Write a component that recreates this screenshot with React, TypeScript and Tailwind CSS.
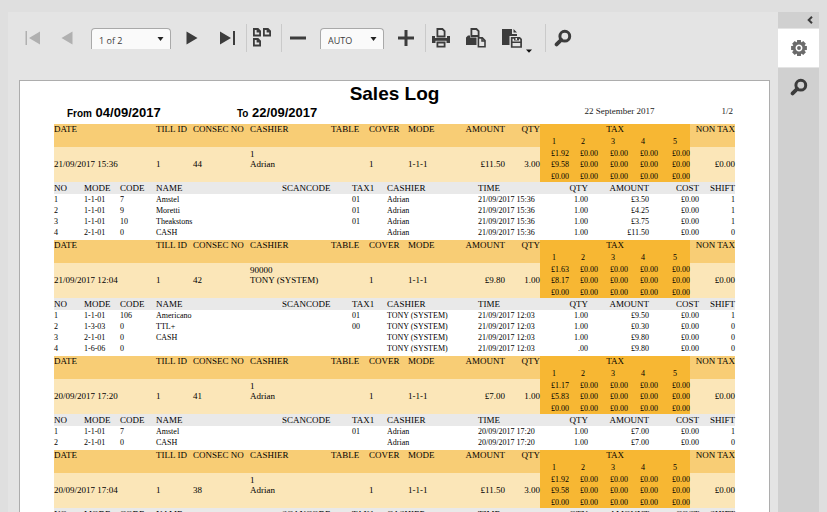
import React from 'react';

interface LogItem {
    no: number;
    mode: string;
    code: string;
    name: string;
    tax: string;
    cashier: string;
    time: string;
    qty: string;
    amount: string;
    shift: string;
}

interface Sale {
    date: string;
    consecNo: string;
    cashierNo: string;
    cashier: string;
    amount: string;
    qty: string;
    tax: string[];
    items: LogItem[];
}

const item = (
    no: number, mode: string, code: string, name: string, tax: string,
    cashier: string, time: string, qty: string, amount: string, shift: string,
): LogItem => ({ no, mode, code, name, tax, cashier, time, qty, amount, shift });

const sales: Sale[] = [
    {
        date: '21/09/2017 15:36', consecNo: '44', cashierNo: '1', cashier: 'Adrian',
        amount: '£11.50', qty: '3.00', tax: ['£1.92', '£9.58', '£0.00'],
        items: [
            item(1, '1-1-01', '7', 'Amstel', '01', 'Adrian', '21/09/2017 15:36', '1.00', '£3.50', '1'),
            item(2, '1-1-01', '9', 'Moretti', '01', 'Adrian', '21/09/2017 15:36', '1.00', '£4.25', '1'),
            item(3, '1-1-01', '10', 'Theakstons', '01', 'Adrian', '21/09/2017 15:36', '1.00', '£3.75', '1'),
            item(4, '2-1-01', '0', 'CASH', '', 'Adrian', '21/09/2017 15:36', '1.00', '£11.50', '0'),
        ],
    },
    {
        date: '21/09/2017 12:04', consecNo: '42', cashierNo: '90000', cashier: 'TONY (SYSTEM)',
        amount: '£9.80', qty: '1.00', tax: ['£1.63', '£8.17', '£0.00'],
        items: [
            item(1, '1-1-01', '106', 'Americano', '01', 'TONY (SYSTEM)', '21/09/2017 12:03', '1.00', '£9.50', '1'),
            item(2, '1-3-03', '0', 'TTL+', '00', 'TONY (SYSTEM)', '21/09/2017 12:03', '1.00', '£0.30', '0'),
            item(3, '2-1-01', '0', 'CASH', '', 'TONY (SYSTEM)', '21/09/2017 12:03', '1.00', '£9.80', '0'),
            item(4, '1-6-06', '0', '', '', 'TONY (SYSTEM)', '21/09/2017 12:03', '.00', '£9.80', '0'),
        ],
    },
    {
        date: '20/09/2017 17:20', consecNo: '41', cashierNo: '1', cashier: 'Adrian',
        amount: '£7.00', qty: '1.00', tax: ['£1.17', '£5.83', '£0.00'],
        items: [
            item(1, '1-1-01', '7', 'Amstel', '01', 'Adrian', '20/09/2017 17:20', '1.00', '£7.00', '1'),
            item(2, '2-1-01', '0', 'CASH', '', 'Adrian', '20/09/2017 17:20', '1.00', '£7.00', '0'),
        ],
    },
    {
        date: '20/09/2017 17:04', consecNo: '38', cashierNo: '1', cashier: 'Adrian',
        amount: '£11.50', qty: '3.00', tax: ['£1.92', '£9.58', '£0.00'],
        items: [],
    },
];

const Separator = () => <div className="w-px self-stretch bg-[#cacaca]" />;

const ToolButton: React.FC<{ label: string; className: string; disabled?: boolean; children: React.ReactNode }> = ({
    label, className, disabled, children,
}) => (
    <button
        type="button"
        aria-label={label}
        disabled={disabled}
        className={`flex h-7 shrink-0 items-center justify-center text-[#3c3c3c] disabled:text-[#b0b0b0] ${className}`}
    >
        {children}
    </button>
);

const ToolSelect: React.FC<{ label: string; className: string; options: string[] }> = ({ label, className, options }) => (
    <div className={`relative h-[21px] shrink-0 ${className}`}>
        <select
            aria-label={label}
            className="block h-full w-full appearance-none rounded-t border border-b-0 border-[#a9a9a9] bg-[#fafafa] pt-[5px] pl-[7px] font-['Open_Sans',sans-serif] text-[9px] text-[#3c3c3c]"
        >
            {options.map((o) => <option key={o}>{o}</option>)}
        </select>
        <svg className="pointer-events-none absolute top-[9px] right-[7px] h-1 w-[7px] text-[#222]" viewBox="0 0 7 4">
            <path d="M0.5 0h6L3.5 4z" fill="currentColor" />
        </svg>
    </div>
);

const SearchIcon = () => (
    <svg width="18" height="18" viewBox="0 0 18 18" fill="none" stroke="currentColor">
        <circle cx="10.8" cy="7.2" r="4.9" strokeWidth="3" />
        <path d="M7.2 10.8L2.6 15.4" strokeWidth="3.8" strokeLinecap="round" />
    </svg>
);

const Toolbar = () => (
    <div className="flex h-7 items-center pl-2">
        <ToolButton label="First page" className="w-[34px]" disabled>
            <svg width="16" height="14" viewBox="0 0 16 14" fill="currentColor">
                <path d="M0.5 0H2v14H0.5zM15 0.5v13L4 7z" />
            </svg>
        </ToolButton>
        <ToolButton label="Previous page" className="w-[34px]" disabled>
            <svg width="12" height="14" viewBox="0 0 12 14" fill="currentColor">
                <path d="M11.5 0.5v13L0.5 7z" />
            </svg>
        </ToolButton>
        <ToolSelect label="Page" className="mr-[3px] ml-[7px] w-20" options={['1 of 2', '2 of 2']} />
        <ToolButton label="Next page" className="w-9">
            <svg width="12" height="14" viewBox="0 0 12 14" fill="currentColor">
                <path d="M0.5 0.5v13L11.5 7z" />
            </svg>
        </ToolButton>
        <ToolButton label="Last page" className="w-9">
            <svg width="16" height="14" viewBox="0 0 16 14" fill="currentColor">
                <path d="M0 0.5v13L11 7zM13 0h2v14h-2z" />
            </svg>
        </ToolButton>
        <Separator />
        <ToolButton label="Multipage mode" className="mr-1 w-[30px]">
            <svg width="18" height="20" viewBox="0 0 18 20" fill="none" stroke="currentColor" strokeWidth="1.8">
                <path d="M0.9 1h4l2.2 2.2v4.300H0.9z M4.500 1v2.600h2.600" />
                <path d="M10.900 1h4l2.200 2.200v4.300h-6.200z M14.500 1v2.600h2.600" />
                <path d="M0.900 11h4l2.200 2.200v4.300H0.900z M4.500 11v2.600h2.600" />
            </svg>
        </ToolButton>
        <Separator />
        <ToolButton label="Zoom out" className="w-8">
            <svg width="16" height="4" viewBox="0 0 16 4"><path d="M0 0.5h16v3H0z" fill="currentColor" /></svg>
        </ToolButton>
        <ToolSelect label="Zoom" className="mx-[6px] w-16" options={['AUTO', '100%']} />
        <ToolButton label="Zoom in" className="mr-[3px] w-8">
            <svg width="16" height="16" viewBox="0 0 16 16">
                <path d="M6.5 0h3v6.5H16v3H9.5V16h-3V9.5H0v-3h6.5z" fill="currentColor" />
            </svg>
        </ToolButton>
        <Separator />
        <ToolButton label="Print" className="w-[30px]">
            <svg width="18" height="20" viewBox="0 0 18 20">
                <path d="M0 8h3v2h12V8h3v7H0z" fill="currentColor" />
                <path d="M5.4 8.500V1h5l2.200 2.200v5.300z" fill="#e4e4e4" stroke="currentColor" strokeWidth="1.8" />
                <path d="M3.500 12.800h11V20h-11z" fill="#e4e4e4" />
                <path d="M5.400 14.500h7.200v4.200H5.400z" fill="none" stroke="currentColor" strokeWidth="1.8" />
            </svg>
        </ToolButton>
        <ToolButton label="Print page" className="w-10">
            <svg width="20" height="20" viewBox="0 0 20 20">
                <path d="M0 9.500L2 7.500h2v2h9V17H0z" fill="currentColor" />
                <path d="M5.400 8V1h5l2.200 2.200V8z" fill="#e4e4e4" stroke="currentColor" strokeWidth="1.8" />
                <path d="M10.500 9h6l3.500 3v8h-9.500z" fill="#e4e4e4" />
                <path d="M12.400 9.900h3.900l2.700 2.700v6.200h-6.600z" fill="#e4e4e4" stroke="currentColor" strokeWidth="1.600" />
                <path d="M16 9.900v3h3" fill="none" stroke="currentColor" strokeWidth="1.500" />
            </svg>
        </ToolButton>
        <ToolButton label="Export to" className="relative mr-[17px] w-8">
            <svg width="20" height="20" viewBox="0 0 20 20">
                <path d="M0 1h10v5h5v11H0z" fill="currentColor" />
                <path d="M11.500 1l3.500 3.500h-3.500z" fill="currentColor" />
                <path d="M7.500 8h13v12h-13z" fill="#e4e4e4" />
                <path d="M9.700 9.800h7.900l1.500 1.500v7.700H9.700z" fill="none" stroke="currentColor" strokeWidth="1.700" />
                <path d="M12 9h5v3.500h-5zM9.500 13.500h10v1.500h-10z" fill="currentColor" />
                <path d="M13.500 10h1.500v2h-1.500z" fill="#e4e4e4" />
            </svg>
            <svg className="absolute -right-1 -bottom-px" width="6" height="4" viewBox="0 0 6 4">
                <path d="M0 0.500h6L3 3.800z" fill="#111" />
            </svg>
        </ToolButton>
        <Separator />
        <ToolButton label="Search" className="w-[34px]"><SearchIcon /></ToolButton>
    </div>
);

const Sidebar = () => (
    <aside className="flex w-[41px] shrink-0 flex-col bg-[#d0d0d0]">
        <button type="button" aria-label="Collapse" className="flex h-4 items-center justify-end pr-[6px] text-[#3c3c3c]">
            <svg width="6" height="8" viewBox="0 0 6 8" fill="none" stroke="currentColor" strokeWidth="2">
                <path d="M5 0.8L1.700 4L5 7.200" />
            </svg>
        </button>
        <button type="button" aria-label="Export options" className="flex h-10 items-center justify-center border-y border-[#e4e4e4] bg-white text-[#6b6b6b]">
            <svg width="18" height="18" viewBox="-9 -9 18 18">
                {[0, 45, 90, 135].map((a) => (
                    <path key={a} d="M-1.900 -7.900h3.800L2.600 0L1.900 7.900h-3.800L-2.600 0z" transform={`rotate(${a})`} fill="currentColor" />
                ))}
                <circle r="6.200" fill="currentColor" />
                <circle r="2.700" fill="none" stroke="#fff" strokeWidth="1.500" />
            </svg>
        </button>
        <button type="button" aria-label="Search panel" className="flex h-[38px] items-center justify-center text-[#3c3c3c]">
            <SearchIcon />
        </button>
    </aside>
);

const SaleTable: React.FC<{ sale: Sale }> = ({ sale }) => {
    const th = 'p-0 align-top text-left font-normal';
    const td = 'p-0 pb-[13px] align-bottom';
    return (
        <table className="w-full table-fixed border-collapse text-[9px] leading-[10px] whitespace-nowrap">
            <colgroup>
                <col className="w-[102px]" />
                <col className="w-[37px]" />
                <col className="w-[57px]" />
                <col className="w-[81px]" />
                <col className="w-[38px]" />
                <col className="w-[39px]" />
                <col className="w-[57px]" />
                <col className="w-[40px]" />
                <col className="w-[35px]" />
                <col className="w-[29px]" />
                <col className="w-[29px]" />
                <col className="w-[30px]" />
                <col className="w-[30px]" />
                <col className="w-[32px]" />
                <col className="w-[45px]" />
            </colgroup>
            <thead className="bg-[#f8cd75]">
                <tr className="h-3">
                    <th rowSpan={2} className={th}>DATE</th>
                    <th rowSpan={2} className={th}>TILL ID</th>
                    <th rowSpan={2} className={th}>CONSEC NO</th>
                    <th rowSpan={2} className={th}>CASHIER</th>
                    <th rowSpan={2} className={th}>TABLE</th>
                    <th rowSpan={2} className={th}>COVER</th>
                    <th rowSpan={2} className={th}>MODE</th>
                    <th rowSpan={2} className="p-0 text-right align-top font-normal">AMOUNT</th>
                    <th rowSpan={2} className="p-0 text-right align-top font-normal">QTY</th>
                    <th colSpan={5} className="bg-[#f7b733] p-0 text-center align-top font-normal">TAX</th>
                    <th rowSpan={2} className="p-0 text-right align-top font-normal">NON TAX</th>
                </tr>
                <tr className="h-[11px] text-[8px]">
                    {[1, 2, 3, 4, 5].map((n) => (
                        <th key={n} className="bg-[#f7b733] p-0 pr-[13px] text-right align-bottom font-normal">{n}</th>
                    ))}
                </tr>
            </thead>
            <tbody className="bg-[#fbe6b8]">
                {sale.tax.map((tax, i) => (
                    <tr key={i} className={i === 1 ? 'h-[11px]' : 'h-3'}>
                        {i === 0 && (
                            <>
                                <td rowSpan={3} className={td}>{sale.date}</td>
                                <td rowSpan={3} className={td}>1</td>
                                <td rowSpan={3} className={td}>{sale.consecNo}</td>
                                <td rowSpan={3} className={td}>{sale.cashierNo}<br />{sale.cashier}</td>
                                <td rowSpan={3} className={td} />
                                <td rowSpan={3} className={td}>1</td>
                                <td rowSpan={3} className={td}>1-1-1</td>
                                <td rowSpan={3} className={`${td} text-right`}>{sale.amount}</td>
                                <td rowSpan={3} className={`${td} text-right`}>{sale.qty}</td>
                            </>
                        )}
                        {[tax, '£0.00', '£0.00', '£0.00', '£0.00'].map((value, n) => (
                            <td key={n} className="bg-[#f7b733] p-0 text-right align-bottom text-[8px]">{value}</td>
                        ))}
                        {i === 0 && <td rowSpan={3} className={`${td} text-right`}>£0.00</td>}
                    </tr>
                ))}
            </tbody>
        </table>
    );
};

const ItemTable: React.FC<{ items: LogItem[] }> = ({ items }) => {
    const left = 'p-0 text-left font-normal';
    const right = 'p-0 text-right font-normal';
    return (
        <table className="mb-[2px] w-full table-fixed border-collapse text-[8px] leading-[11px] whitespace-nowrap">
            <colgroup>
                <col className="w-[30px]" />
                <col className="w-[36px]" />
                <col className="w-[36px]" />
                <col className="w-[126px]" />
                <col className="w-[70px]" />
                <col className="w-[35px]" />
                <col className="w-[91px]" />
                <col className="w-[62px]" />
                <col className="w-[48px]" />
                <col className="w-[61px]" />
                <col className="w-[50px]" />
                <col className="w-[36px]" />
            </colgroup>
            <thead className="bg-[#e9e9e9] text-[9px]">
                <tr className="h-3">
                    <th className={left}>NO</th>
                    <th className={left}>MODE</th>
                    <th className={left}>CODE</th>
                    <th className={left}>NAME</th>
                    <th className={left}>SCANCODE</th>
                    <th className={left}>TAX1</th>
                    <th className={left}>CASHIER</th>
                    <th className={left}>TIME</th>
                    <th className={right}>QTY</th>
                    <th className={right}>AMOUNT</th>
                    <th className={right}>COST</th>
                    <th className={right}>SHIFT</th>
                </tr>
            </thead>
            <tbody>
                {items.map((row) => (
                    <tr key={row.no} className="h-[11px]">
                        <td className={left}>{row.no}</td>
                        <td className={left}>{row.mode}</td>
                        <td className={left}>{row.code}</td>
                        <td className={left}>{row.name}</td>
                        <td />
                        <td className={left}>{row.tax}</td>
                        <td className={left}>{row.cashier}</td>
                        <td className={left}>{row.time}</td>
                        <td className={right}>{row.qty}</td>
                        <td className={right}>{row.amount}</td>
                        <td className={right}>£0.00</td>
                        <td className={right}>{row.shift}</td>
                    </tr>
                ))}
            </tbody>
        </table>
    );
};

const Report = () => (
    <article className="min-h-full border border-[#adadad] bg-white px-[34px] font-['Liberation_Serif',serif] text-black">
        <h1 className="pt-px text-center font-['Liberation_Sans',sans-serif] text-[19px] leading-6 font-bold">Sales Log</h1>
        <div className="mb-1 flex h-[14px] items-start pr-[2px] pl-[13px] font-['Liberation_Sans',sans-serif] text-[13px] leading-[14px] font-bold">
            <div className="w-[170px]"><span className="text-[10px]">From</span> 04/09/2017</div>
            <div><span className="text-[10px]">To</span> 22/09/2017</div>
            <div className="ml-auto flex gap-[67px] font-['Liberation_Serif',serif] text-[9px] leading-[10px] font-normal text-[#222]">
                <span>22 September 2017</span>
                <span>1/2</span>
            </div>
        </div>
        {sales.map((sale) => (
            <section key={sale.date}>
                <SaleTable sale={sale} />
                <ItemTable items={sale.items} />
            </section>
        ))}
    </article>
);

export default function App() {
    return (
        <div className="flex h-screen overflow-hidden bg-[#dfdfdf] pt-3 pr-2 pl-2">
            <main className="flex min-w-0 flex-1 flex-col bg-[#e4e4e4] pt-3">
                <Toolbar />
                <div className="mt-7 min-h-0 flex-1 overflow-y-auto pr-2 pl-[11px] [scrollbar-width:none]">
                    <Report />
                </div>
            </main>
            <Sidebar />
        </div>
    );
}
